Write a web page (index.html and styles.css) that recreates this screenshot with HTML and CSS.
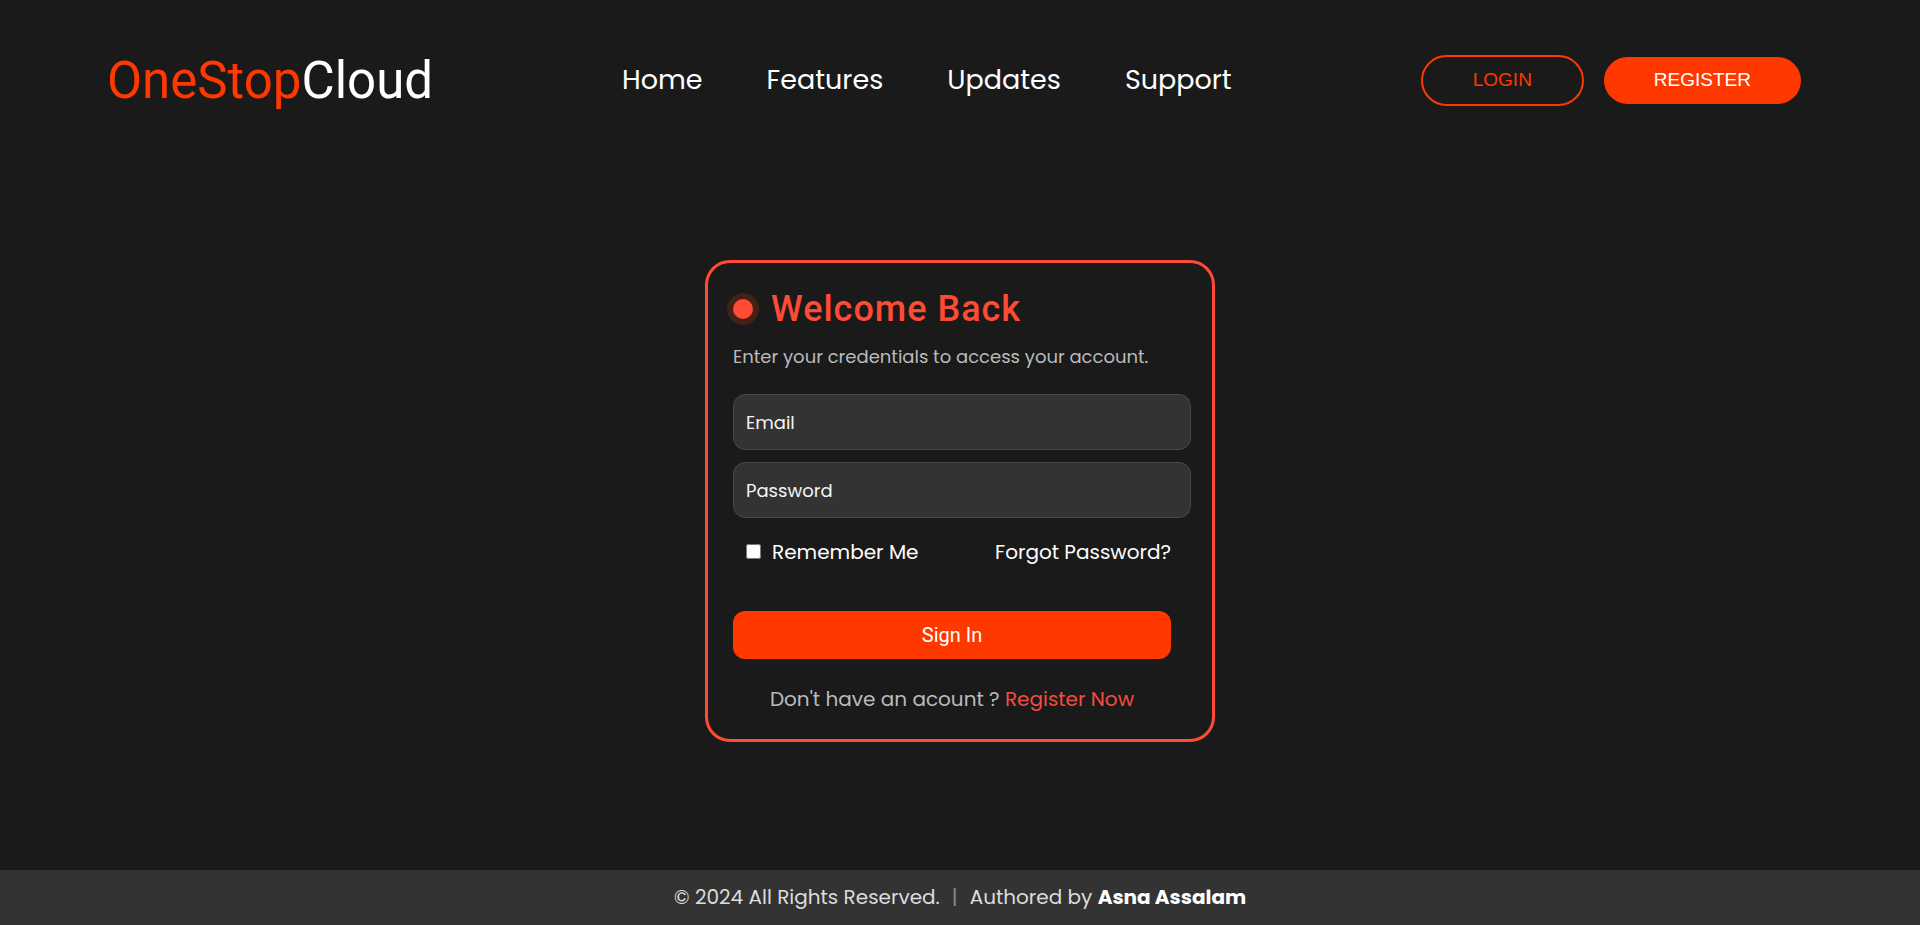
FILE: index.html
```html
<!DOCTYPE html>
<html lang="en">
<head>
<meta charset="utf-8">
<meta name="viewport" content="width=device-width, initial-scale=1">
<title>OneStopCloud - Login</title>
<link rel="stylesheet" href="styles.css">
</head>
<body>
<header class="header">
  <a class="logo" href="#">OneStop<span class="logo-accent">Cloud</span></a>
  <nav class="nav">
    <a href="#">Home</a>
    <a href="#">Features</a>
    <a href="#">Updates</a>
    <a href="#">Support</a>
  </nav>
  <div class="actions">
    <button class="btn btn-outline" type="button">LOGIN</button>
    <button class="btn btn-solid" type="button">REGISTER</button>
  </div>
</header>
<main class="main">
  <section class="card">
    <h1 class="title"><span class="dot"></span>Welcome Back</h1>
    <p class="message">Enter your credentials to access your account.</p>
    <form class="form">
      <input class="field" type="email" placeholder="Email" aria-label="Email">
      <input class="field" type="password" placeholder="Password" aria-label="Password">
      <div class="options">
        <label class="remember" for="remember"><input class="check" id="remember" type="checkbox">Remember Me</label>
        <a class="forgot" href="#">Forgot Password?</a>
      </div>
      <button class="submit" type="submit">Sign In</button>
      <p class="signup">Don't have an acount ? <a href="#">Register Now</a></p>
    </form>
  </section>
</main>
<footer class="footer">
  <span>© 2024 All Rights Reserved.</span>
  <span class="divider">|</span>
  <span>Authored by <strong>Asna Assalam</strong></span>
</footer>
</body>
</html>
```
FILE: styles.css
```css
* { box-sizing: border-box; }
body {
  margin: 0;
  min-height: 100vh;
  display: flex;
  flex-direction: column;
  background: #1a1a1a;
  color: #fff;
  font-family: Poppins, Inter, sans-serif;
  font-size: 20px;
}
a { color: inherit; text-decoration: none; }
h1, p { margin: 0; }
.header {
  display: flex;
  align-items: center;
  justify-content: space-between;
  height: 160px;
  padding: 0 119px 0 107px;
}
.logo {
  color: #ff3800;
  font-family: Roboto, sans-serif;
  font-size: 51px;
  font-weight: 400;
}
.logo-accent { color: #fff; }
.nav { display: flex; gap: 64px; font-size: 27px; }
.actions { display: flex; align-items: center; gap: 20px; }
.btn {
  padding: 11px 50px 13px;
  border: 0;
  border-radius: 26px;
  font-family: "Liberation Sans", Arial, sans-serif;
  font-size: 19px;
  line-height: 23px;
}
.btn-outline {
  border: 2px solid #ff3800;
  background: transparent;
  color: #ff3800;
}
.btn-solid { background: #ff3800; color: #fff; }
.main { flex: 1; padding: 100px 20px; }
.card {
  max-width: 510px;
  margin: 0 auto;
  padding: 25px 21px 25px 25px;
  border: 3px solid #ff4b33;
  border-radius: 25px;
}
.title {
  display: flex;
  align-items: center;
  gap: 18px;
  color: #ff4b33;
  font-family: Roboto, sans-serif;
  font-size: 36px;
  font-weight: 500;
  letter-spacing: 1px;
  line-height: 42px;
}
.dot {
  width: 20px;
  height: 20px;
  border-radius: 50%;
  background: #ff4b33;
  box-shadow: 0 0 0 6px #442019;
}
.message {
  margin-top: 13px;
  color: #bbb;
  font-size: 18px;
  line-height: 28px;
}
.form { display: flex; flex-direction: column; margin-top: 23px; }
.field {
  width: 100%;
  height: 56px;
  margin-bottom: 12px;
  padding: 0 12px;
  border: 1px solid #484848;
  border-radius: 12px;
  background: #333;
  color: #fff;
  font: inherit;
  font-size: 18px;
}
.field::placeholder { color: #f5f5f5; opacity: 1; }
.options {
  display: flex;
  justify-content: space-between;
  margin: 7px 20px 0 13px;
  line-height: 30px;
}
.remember { display: flex; align-items: center; gap: 11px; }
.check { width: 15px; height: 15px; margin: 0 0 2px; }
.submit {
  margin: 44px 20px 0 0;
  padding: 12px;
  border: 0;
  border-radius: 12px;
  background: #ff3800;
  color: #fff;
  font-family: Roboto, sans-serif;
  font-size: 20px;
  line-height: 24px;
}
.signup {
  margin: 25px 20px 0 0;
  color: #bbb;
  line-height: 30px;
  text-align: center;
}
.signup a { color: #f34c3e; }
.footer {
  display: flex;
  justify-content: center;
  gap: 12px;
  padding: 12px 20px;
  background: #333;
  color: #ddd;
  line-height: 31px;
}
.divider { color: #888; }
.footer strong { color: #fff; }
```
